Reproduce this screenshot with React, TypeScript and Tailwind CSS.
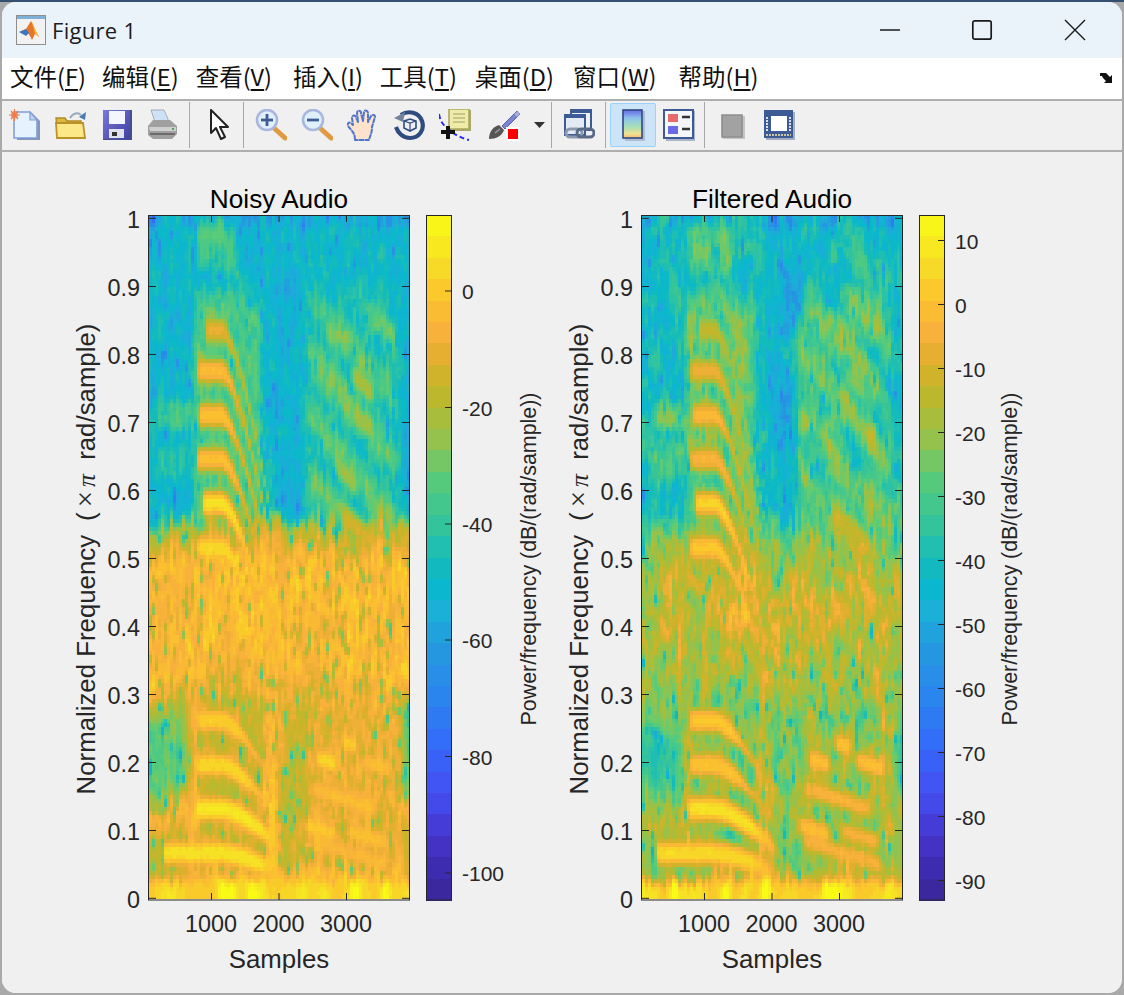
import React, { useMemo } from "react";

const STOPS: [number, number, number, number][] = [
  [0, 0x3a, 0x26, 0x98], [0.04, 0x3c, 0x2a, 0xaa], [0.09, 0x45, 0x35, 0xcc], [0.16, 0x44, 0x50, 0xf4],
  [0.22, 0x35, 0x68, 0xfa], [0.29, 0x2b, 0x84, 0xf0], [0.36, 0x25, 0x96, 0xe0], [0.42, 0x1b, 0xb0, 0xd8],
  [0.46, 0x08, 0xb8, 0xcc], [0.5, 0x18, 0xbc, 0xb8], [0.55, 0x35, 0xc5, 0x9a], [0.62, 0x5b, 0xcb, 0x78],
  [0.66, 0x8c, 0xc4, 0x52], [0.73, 0xb9, 0xb9, 0x2e], [0.78, 0xd9, 0xb0, 0x2a], [0.82, 0xf7, 0xae, 0x3c],
  [0.88, 0xfc, 0xc3, 0x2d], [0.93, 0xf6, 0xde, 0x26], [1, 0xf9, 0xfb, 0x15],
];
function color(v: number) {
  const x = Math.min(1, Math.max(0, v));
  for (let i = 1; i < STOPS.length; i++) {
    if (x <= STOPS[i][0]) {
      const a = STOPS[i - 1], b = STOPS[i];
      const k = (x - a[0]) / (b[0] - a[0]);
      return `rgb(${Math.round(a[1] + (b[1] - a[1]) * k)},${Math.round(a[2] + (b[2] - a[2]) * k)},${Math.round(a[3] + (b[3] - a[3]) * k)})`;
    }
  }
  return "rgb(249,251,21)";
}
function hash(a: number, b: number, s: number) {
  const h = Math.sin(a * 127.1 + b * 311.7 + s * 74.7) * 43758.5453;
  return h - Math.floor(h);
}
const sm = (x: number, a: number, b: number) => {
  const k = Math.min(1, Math.max(0, (x - a) / (b - a)));
  return k * k * (3 - 2 * k);
};
const win = (x: number, a: number, b: number, e: number) => sm(x, a - e, a + e) * (1 - sm(x, b - e, b + e));
const plateau = (x: number, c: number, w: number) => {
  const d = (x - c) / w;
  return Math.exp(-Math.abs(d * d * d));
};
function vnoise(x: number, y: number, s: number) {
  const xi = Math.floor(x), yi = Math.floor(y);
  const fx = sm(x - xi, 0, 1), fy = sm(y - yi, 0, 1);
  const a = hash(xi, yi, s), b = hash(xi + 1, yi, s), c = hash(xi, yi + 1, s), d = hash(xi + 1, yi + 1, s);
  return (a * (1 - fx) + b * fx) * (1 - fy) + (c * (1 - fx) + d * fx) * fy - 0.5;
}

const H1: [number, number, number, number, number][] = [
  [0.065, 0.95, 0.93, 0.05, 0.41],
  [0.13, 0.96, 0.95, 0.17, 0.41],
  [0.195, 0.93, 0.89, 0.18, 0.37],
  [0.26, 0.91, 0.9, 0.18, 0.35],
  [0.515, 0.93, 0.9, 0.18, 0.33],
  [0.58, 0.95, 0.92, 0.2, 0.34],
  [0.645, 0.88, 0.85, 0.18, 0.33],
  [0.71, 0.89, 0.86, 0.19, 0.31],
  [0.775, 0.87, 0.82, 0.18, 0.31],
  [0.835, 0.81, 0.76, 0.21, 0.3],
  [0.975, 0.62, 0.55, 0.18, 0.3],
  [0.905, 0.62, 0.64, 0.3, 0.36],
];
const H2: [number, number, number, number, number][] = [
  [0.065, 0.86, 0.84, 0.6, 0.94],
  [0.1, 0.9, 0.88, 0.58, 0.74],
  [0.09, 0.88, 0.84, 0.74, 0.93],
  [0.145, 0.87, 0.85, 0.6, 0.9],
  [0.2, 0.93, 0.89, 0.62, 0.74],
  [0.225, 0.91, 0.89, 0.72, 0.82],
  [0.195, 0.88, 0.88, 0.8, 0.95],
  [0.83, 0.69, 0.66, 0.66, 0.73],
  [0.755, 0.71, 0.65, 0.76, 0.88],
  [0.7, 0.7, 0.66, 0.76, 0.88],
  [0.62, 0.69, 0.66, 0.7, 0.82],
  [0.54, 0.78, 0.75, 0.72, 0.9],
];

function value(c: number, r: number, cols: number, rows: number, seed: number, filtered: boolean) {
  const t = (c + 0.5) / cols;
  const y = 215 + ((r + 0.5) / rows) * 685;
  const f = (898.3 - y) / 680;
  const off = Math.floor(hash(c, 99, seed) * 3);
  const n = hash(c, Math.floor((r + off) / 3), seed) - 0.5;
  const n2 = hash(c, r, seed + 1) - 0.5;
  const rare = hash(c, Math.floor((r + off) / 2), seed + 2);
  const slow = vnoise(c / 4, r / 9, seed + 3);
  const fj = f + (hash(c, 77, seed) - 0.5) * 0.035;

  let hi = (filtered ? 0.495 : 0.46) + n * (filtered ? 0.14 : 0.12) + n2 * 0.06 + slow * (filtered ? 0.12 : 0.05);
  if (rare < 0.05) hi -= 0.14;
  if (f > 0.985) hi -= 0.07 * (hash(c, 5, seed) > 0.4 ? 1 : 0);
  const syl2 = win(t, 0.6, 0.95, 0.03) * (1 - sm(f, 0.84, 0.92));
  hi += syl2 * (0.11 + 0.06 * Math.sin(t * 34 + f * 70));
  const syl1 = win(t, 0.17, 0.43, 0.02) * (1 - sm(f, 0.86, 0.92));
  hi += syl1 * 0.14;
  hi += win(t, 0.19, 0.33, 0.02) * win(f, 0.92, 1.0, 0.01) * 0.1;
  hi += win(t, 0.04, 0.16, 0.02) * win(f, 0.69, 0.73, 0.008) * 0.12;
  hi += win(t, 0.03, 0.16, 0.02) * win(f, 0.62, 0.66, 0.008) * 0.06;
  hi -= win(t, 0.47, 0.6, 0.02) * (filtered ? 0.05 : 0.015);

  let lo = (filtered ? 0.745 : 0.86) + n * (filtered ? 0.17 : 0.1) + n2 * (filtered ? 0.06 : 0.05) + slow * (filtered ? 0.16 : 0.05);
  if (rare < 0.1) lo -= filtered ? 0.12 : 0.16;
  if (rare < 0.025) lo -= 0.14;
  lo -= sm(fj, 0.49, 0.54) * (filtered ? 0 : 0.1);
  const gate = sm(fj, 0.03, 0.06) * (1 - sm(fj, 0.27, 0.36));
  const side = Math.max(1 - sm(t, 0.11, 0.19), sm(t, 0.95, 0.99));
  const fm = Math.max(sm(fj, 0.12, 0.17) * (1 - sm(fj, 0.25, 0.33)), 0.45 * (1 - sm(fj, 0.09, 0.14)));
  lo -= side * fm * (filtered ? 0.16 : 0.24) + side * fm * n * 0.2;
  lo -= gate * win(t, 0.19, 0.44, 0.01) * 0.1;
  lo -= gate * win(t, 0.5, 0.6, 0.03) * 0.1;
  lo -= gate * win(t, 0.6, 0.95, 0.02) * 0.05;

  const mask = filtered ? sm(fj, 0.44, 0.62) : sm(fj, 0.54, 0.565);
  let v = lo * (1 - mask) + hi * mask;

  for (const [fc, an, af, t0, t1] of H1) {
    const a = filtered ? af : an;
    const k = t > 0.28 ? Math.pow((t - 0.28) / 0.22, 1.5) : 0;
    const center = fc * (1 - 0.42 * k);
    const flat = 1 - sm(t, t1 - 0.03, t1 + 0.04);
    const w = fc < 0.15 ? 0.024 + 0.006 * flat : 0.013 + 0.016 * flat;
    const env = sm(t, t0 - 0.012, t0 + 0.012) * (1 - sm(t, 0.5, 0.58));
    const drop = 1 - 0.16 * (1 - flat) * sm(t, t1, 0.55);
    const g = plateau(f, center, w);
    v = Math.max(v, a * drop * env * g + n2 * 0.02 * g);
  }
  for (const [fc, an, af, t0, t1] of H2) {
    const a = filtered ? af : an;
    const e = win(t, t0, t1, 0.035);
    const tc = (t0 + t1) / 2;
    const slope = fc > 0.5 ? -0.35 : -0.12;
    const g = plateau(f, fc + (t - tc) * slope, fc > 0.5 ? 0.03 : 0.024);
    v = Math.max(v, a * e * g + n2 * 0.04 * g);
  }
  const fb = f + (hash(c, 41, seed) - 0.5) * 0.012;
  if (fb < 0.032) {
    const x = c / 3.4;
    const xi = Math.floor(x);
    const q = sm(x - xi, 0, 1);
    const bump = hash(xi, 7, seed + 4) * (1 - q) + hash(xi + 1, 7, seed + 4) * q;
    const top = 1 - sm(fb, 0.016, 0.032);
    v = v * (1 - top) + (0.89 + 0.14 * bump * bump + n2 * 0.015) * top;
  }
  return v;
}

function Heat({ seed, filtered }: { seed: number; filtered: boolean }) {
  const paths = useMemo(() => {
    const cols = 87, rows = 171, lv = 48;
    const g: number[][] = [];
    for (let c = 0; c < cols; c++) {
      g[c] = [];
      for (let r = 0; r < rows; r++) g[c][r] = value(c, r, cols, rows, seed, filtered);
    }
    const at = (c: number, r: number) => g[Math.min(cols - 1, Math.max(0, c))][Math.min(rows - 1, Math.max(0, r))];
    const d: string[] = Array.from({ length: lv }, () => "");
    for (let c = 0; c < cols; c++) {
      for (let r = 0; r < rows; r++) {
        const vert = (at(c, r - 2) + 2 * at(c, r - 1) + 3 * at(c, r) + 2 * at(c, r + 1) + at(c, r + 2)) / 9;
        const horiz = (at(c - 1, r) + 2 * at(c, r) + at(c + 1, r)) / 4;
        const v = 0.6 * vert + 0.25 * horiz + 0.15 * at(c, r);
        const q = Math.min(lv - 1, Math.max(0, Math.round(v * (lv - 1))));
        d[q] += `M${149 + c * 3} ${215 + r * 4}h3v4h-3z`;
      }
    }
    return d;
  }, [seed, filtered]);
  return (
    <g shapeRendering="crispEdges">
      {paths.map((p, i) => (p ? <path key={i} d={p} fill={color(i / 47)} /> : null))}
    </g>
  );
}

const YT: [string, number][] = [
  ["1", 218.3], ["0.9", 286.5], ["0.8", 354.5], ["0.7", 422.5], ["0.6", 490.5], ["0.5", 558.5],
  ["0.4", 626.5], ["0.3", 694.5], ["0.2", 762.5], ["0.1", 830.5], ["0", 898.3],
];
const XT: [string, number][] = [["1000", 211.5], ["2000", 279], ["3000", 346.5]];
const DARK = "#262626";

function Subplot({ title, seed, filtered, cticks, labelX }: { title: string; seed: number; filtered: boolean; cticks: [string, number][]; labelX: number }) {
  const bars = Array.from({ length: 32 }, (_, i) => i);
  return (
    <svg width={493} height={841} viewBox="2 152 493 841" className="shrink-0 block overflow-visible">
      <Heat seed={seed} filtered={filtered} />
      <rect x={148.5} y={215.5} width={261} height={684.5} fill="none" stroke={DARK} strokeWidth={1} />
      {YT.map(([l, y]) => (
        <g key={l}>
          <path d={`M149 ${y}h7M409 ${y}h-7`} stroke={DARK} strokeWidth={1} />
          <text x={140} y={y + 9.5} textAnchor="end" fontSize={23.4} fill={DARK}>{l}</text>
        </g>
      ))}
      {XT.map(([l, x]) => (
        <g key={l}>
          <path d={`M${x} 900v-7M${x} 215v7`} stroke={DARK} strokeWidth={1} />
          <text x={x - 0.5} y={932} textAnchor="middle" fontSize={23.4} fill={DARK}>{l}</text>
        </g>
      ))}
      <text x={279} y={207.5} textAnchor="middle" fontSize={26.2} fill="#000">{title}</text>
      <text x={279} y={967.5} textAnchor="middle" fontSize={25.8} fill={DARK}>Samples</text>
      <text transform="translate(95 559) rotate(-90)" textAnchor="middle" fontSize={25.8} fill={DARK}>
        <tspan>Normalized Frequency</tspan>
        <tspan dx={14}>(</tspan>
        <tspan dx={5} fontFamily="'Liberation Serif', serif" fontSize={29}>×</tspan>
        <tspan dx={4} fontFamily="'Liberation Serif', serif" fontStyle="italic">π</tspan>
        <tspan dx={7}> rad/sample)</tspan>
      </text>

      <g shapeRendering="crispEdges">
        {bars.map((i) => (
          <rect key={i} x={426} y={215 + (685 * i) / 32} width={26} height={685 / 32 + 1} fill={color(1 - (i + 0.5) / 32)} />
        ))}
      </g>
      <rect x={426.5} y={215.5} width={25} height={684.5} fill="none" stroke={DARK} strokeWidth={1} />
      {cticks.map(([l, y]) => (
        <g key={l}>
          <path d={`M451 ${y}h-6`} stroke={DARK} strokeWidth={1} />
          <text x={462} y={y + 8} fontSize={21} fill={DARK}>{l}</text>
        </g>
      ))}
      <text transform={`translate(${labelX} 559) rotate(-90)`} textAnchor="middle" fontSize={21.4} fill={DARK}>
        Power/frequency (dB/(rad/sample))
      </text>
    </svg>
  );
}

const Ico = ({ children }: { children: React.ReactNode }) => (
  <svg width={32} height={32} viewBox="0 0 32 32" className="block blur-[0.5px]">{children}</svg>
);

const IconNew = () => (
  <Ico>
    <path d="M6 4h17l8 8v19H8V4z" fill="#8796b8" />
    <path d="M5 3h16l7 8v18H5z" fill="#e6f2fd" stroke="#7f9fd6" strokeWidth={1.6} />
    <path d="M21 3v8h7z" fill="#c3d4ee" stroke="#7f9fd6" strokeWidth={1.2} />
    <circle cx={5.5} cy={6} r={3.6} fill="#f0a070" />
    <path d="M5.5 0v12M0 6h11M2 2l7 8M9 2l-7 8" stroke="#ea7c4c" strokeWidth={1.2} />
  </Ico>
);
const IconOpen = () => (
  <Ico>
    <path d="M1 9h9l2 3h14v17H3z" fill="#e0b83c" stroke="#b08c28" strokeWidth={1.4} />
    <path d="M2 29l-1-15h27l2 15z" fill="#fde888" stroke="#bb9128" strokeWidth={1.8} />
    <path d="M15 9c3-5 8-6 11-3" fill="none" stroke="#9aa8bc" strokeWidth={2} />
    <path d="M31 3l-1 8-6-3z" fill="#4b7bb0" />
  </Ico>
);
const IconSave = () => (
  <Ico>
    <defs>
      <linearGradient id="svg1" x1="0" y1="0" x2="1" y2="1">
        <stop offset="0" stopColor="#7878e0" />
        <stop offset="1" stopColor="#40409c" />
      </linearGradient>
    </defs>
    <path d="M2 1h29v30H2z" fill="#44508c" />
    <path d="M2 1h27v29H2z" fill="url(#svg1)" />
    <path d="M8 2h16v13H8z" fill="#f4f6ff" />
    <path d="M8 20h15v9H8z" fill="#dfe2ec" />
    <path d="M11 23h5v4h-5z" fill="#333" />
  </Ico>
);
const IconPrint = () => (
  <Ico>
    <path d="M4 1h13l4 9v6H9z" fill="#cfe2f5" stroke="#a4acb8" strokeWidth={1} />
    <path d="M1 17l5-6h17l7 6v8l-5 5H6l-5-4z" fill="#a0a0a0" />
    <path d="M2 18h27v4H3z" fill="#cfcfcf" />
    <path d="M3 25h25" stroke="#666" strokeWidth={1.8} />
    <path d="M25 19h2v2h-2z" fill="#4ea84e" />
  </Ico>
);
const IconPointer = () => (
  <Ico>
    <path d="M7 1l0 23 5-5 5 11 4-2-5-10h8z" fill="#fff" stroke="#222" strokeWidth={2} strokeLinejoin="round" />
  </Ico>
);
const Lens = ({ plus }: { plus: boolean }) => (
  <Ico>
    <path d="M19 19l11 10" stroke="#e09a40" strokeWidth={5} strokeLinecap="round" />
    <circle cx={12} cy={11} r={10} fill="#dff0fa" stroke="#a9b6de" strokeWidth={2.6} />
    <path d="M6 11h12" stroke="#3d5c94" strokeWidth={2.8} />
    {plus && <path d="M12 5v12" stroke="#3d5c94" strokeWidth={2.8} />}
  </Ico>
);
const IconHand = () => (
  <Ico>
    <path d="M8 31c0-4-1-7-3-9l-4-5c-1-3 1-4 3-3l2 2-1-7c0-3 3-3 4-1l2 5-1-9c0-3 4-3 4 0l2 8 1-9c0-2 4-2 4 1l0 9 3-6c2-2 4-1 4 1l-3 10c0 6-2 9-3 13z" fill="#fde3cc" stroke="#4f75cc" strokeWidth={2} strokeLinejoin="round" strokeDasharray="5 .5" />
  </Ico>
);
const IconRotate = () => (
  <Ico>
    <path d="M8 6c7-5 18-3 21 6 3 9-3 17-12 17-7 0-12-5-14-11" fill="none" stroke="#2f4c80" strokeWidth={4.2} />
    <path d="M1 9l11-6-2 10z" fill="#74839c" />
    <path d="M11 12l6-2 6 2v7l-6 3-6-3z" fill="#eef0f6" stroke="#2f4c80" strokeWidth={1.6} />
    <path d="M17 14v8M11 12l6 2 6-2" stroke="#2f4c80" strokeWidth={1.2} fill="none" />
  </Ico>
);
const IconTip = () => (
  <Ico>
    <path d="M10 1h22v21H10z" fill="#a8a868" />
    <path d="M10 0h20v20H10z" fill="#f0eca8" stroke="#a8a860" strokeWidth={1.6} />
    <path d="M14 5h12M14 9h12M14 13h12" stroke="#b8b880" strokeWidth={1.6} />
    <path d="M0 5c1 6 3 10 8 14s10 9 22 12" fill="none" stroke="#2a2af0" strokeWidth={2} strokeDasharray="5 3" />
    <path d="M9 17v13M2 23h14" stroke="#111" strokeWidth={4} />
  </Ico>
);
const IconBrush = () => (
  <Ico>
    <path d="M14 17L29 2l3 3-15 15z" fill="#7c86d0" stroke="#5a62a8" strokeWidth={1} />
    <path d="M30 2l2 3-3 3-3-3z" fill="#a8aedc" />
    <path d="M1 30c0-6 3-12 10-14l5 5c-2 6-8 9-15 9z" fill="#555" />
    <path d="M7 24l5-4" stroke="#a0a0a0" strokeWidth={1.4} />
    <path d="M18 18h14v14H18z" fill="#fff" />
    <path d="M20 20h10v10H20z" fill="#f00" />
  </Ico>
);
const IconLink = () => (
  <Ico>
    <path d="M8 1h20v20H8z" fill="#eef2f8" stroke="#3c5a94" strokeWidth={2} />
    <path d="M8 1h20v3H8z" fill="#3c5a94" />
    <path d="M2 6h20v20H2z" fill="#e4eaf3" stroke="#3c5a94" strokeWidth={2} />
    <path d="M2 6h20v3H2z" fill="#3c5a94" />
    <rect x={3} y={20} width={16} height={8} rx={4} fill="none" stroke="#8c99ad" strokeWidth={3} />
    <rect x={14} y={20} width={17} height={8} rx={4} fill="none" stroke="#5a6a86" strokeWidth={3} />
  </Ico>
);
const IconColorbar = () => (
  <Ico>
    <defs>
      <linearGradient id="cbg" x1="0" y1="0" x2="0" y2="1">
        <stop offset="0" stopColor="#6a6ae8" />
        <stop offset="0.3" stopColor="#8cc4ea" />
        <stop offset="0.6" stopColor="#a8e0b8" />
        <stop offset="0.85" stopColor="#f0e090" />
        <stop offset="1" stopColor="#f8b878" />
      </linearGradient>
    </defs>
    <path d="M8 2h20v30H8z" fill="#b0bcd0" />
    <rect x={6} y={1} width={19} height={28} fill="url(#cbg)" stroke="#2f4a80" strokeWidth={1.6} />
  </Ico>
);
const IconLegend = () => (
  <Ico>
    <path d="M3 2h29v30H3z" fill="#a8b4c8" />
    <rect x={1} y={1} width={29} height={28} fill="#f4f6fa" stroke="#3c5a94" strokeWidth={2} />
    <path d="M5 5h10v8H5z" fill="#e86a6a" />
    <path d="M5 17h10v8H5z" fill="#6a6ae6" />
    <path d="M19 8h8M19 20h8" stroke="#333" strokeWidth={2.4} />
  </Ico>
);
const IconGray = () => (
  <Ico>
    <path d="M6 7h22v23H6z" fill="#c4c4c4" />
    <path d="M5 6h20v22H5z" fill="#a2a2a2" stroke="#8e8e8e" strokeWidth={1.6} />
  </Ico>
);
const IconTools = () => (
  <Ico>
    <path d="M3 3h29v28H3z" fill="#a4aebe" />
    <path d="M1 1h29v28H1z" fill="#3c5a94" />
    <path d="M8 7h16v15H8z" fill="#fff" />
    <path d="M4 8v14M27 8v14" stroke="#dadfe6" strokeWidth={2} strokeDasharray="2 1" />
    <path d="M3 26h25" stroke="#c9c6a6" strokeWidth={2} strokeDasharray="2 1" />
  </Ico>
);

const Btn = ({ children, active }: { children: React.ReactNode; active?: boolean }) => (
  <div className={active ? "w-[46px] h-[44px] flex items-center justify-center bg-[#cce4f7] border border-[#99d1ff] rounded-[2px]" : "w-[46px] h-[44px] flex items-center justify-center"}>
    {children}
  </div>
);
const Sep = () => <div className="w-px h-[46px] bg-[#a8a8a8]" />;

const MENU: [string, string, string][] = [
  ["文件", "F", "whitespace-nowrap mr-[-1px]"],
  ["编辑", "E", "whitespace-nowrap"],
  ["查看", "V", "whitespace-nowrap mr-[4px]"],
  ["插入", "I", "whitespace-nowrap"],
  ["工具", "T", "whitespace-nowrap mr-[1px]"],
  ["桌面", "D", "whitespace-nowrap mr-[2px]"],
  ["窗口", "W", "whitespace-nowrap mr-[5px]"],
  ["帮助", "H", "whitespace-nowrap"],
];

export default function App() {
  return (
    <div className="w-[1124px] h-[995px] overflow-hidden bg-[#a9a9a9] border-t-2 border-[#35506e] font-['Liberation_Sans',sans-serif]">
      <div className="ml-[2px] mr-[2px] h-[991px] flex flex-col rounded-[14px] overflow-hidden bg-[#f0f0f0]">
        <div className="h-[56px] shrink-0 bg-[#ebf3fa] flex items-center pl-[14px] text-[#1c1c1c]">
          <svg width={30} height={30} viewBox="0 0 30 30" className="block shrink-0">
            <rect x={0.5} y={0.5} width={29} height={29} fill="#f2f2f2" stroke="#8e8e8e" />
            <path d="M1 1h28v3H1z" fill="#7fb0d6" />
            <path d="M3 17l7-3 5-8c2 2 3 7 8 16l-4-3-3 6c-2-4-4-8-6-9z" fill="#e8762a" />
            <path d="M15 6c2 2 3 7 8 16l-4-3c-1-5-2-9-4-13z" fill="#f6c23c" />
            <path d="M3 17l7-3 3 4-3 3z" fill="#3a78c0" />
          </svg>
          <span className="ml-[6px] text-[22px] leading-none tracking-[0.3px] font-['Open_Sans',sans-serif]">Figure 1</span>
          <div className="flex-1" />
          <svg width={24} height={24} viewBox="0 0 24 24" className="block mr-[68px]">
            <path d="M2 12h20" stroke="#1a1a1a" strokeWidth={1.6} />
          </svg>
          <svg width={24} height={24} viewBox="0 0 24 24" className="block mr-[69px]">
            <rect x={2.8} y={2.8} width={18.4} height={18.4} rx={2} fill="none" stroke="#1a1a1a" strokeWidth={1.7} />
          </svg>
          <svg width={24} height={24} viewBox="0 0 24 24" className="block mr-[35px]">
            <path d="M2 2l20 20M22 2L2 22" stroke="#1a1a1a" strokeWidth={1.4} />
          </svg>
        </div>
        <div className="h-[41px] shrink-0 bg-white flex items-center pl-[8px] pb-[3px] gap-[17px] text-[23.5px] leading-none text-[#111] font-['Noto_Sans_CJK_SC',sans-serif]">
          {MENU.map(([zh, k, cls]) => (
            <span key={k} className={cls}>
              {zh}(<span className="underline underline-offset-[3px]">{k}</span>)
            </span>
          ))}
          <div className="flex-1" />
          <svg width={16} height={14} viewBox="0 0 16 14" className="block mr-[7px] mt-[2px]">
            <path d="M1 2h6l1 1 3 3 2-2v8H5l2-2-3-3-1-2H1z" fill="#111" />
          </svg>
        </div>
        <div className="h-[53px] shrink-0 bg-[#f0f0f0] border-y-2 border-[#aeaeae] flex items-center pb-[1px]">
          <Btn><IconNew /></Btn>
          <Btn><IconOpen /></Btn>
          <Btn><IconSave /></Btn>
          <Btn><IconPrint /></Btn>
          <div className="ml-[3px] mr-[7px]"><Sep /></div>
          <Btn><IconPointer /></Btn>
          <div className="mr-[4px]"><Sep /></div>
          <Btn><Lens plus /></Btn>
          <Btn><Lens plus={false} /></Btn>
          <Btn><IconHand /></Btn>
          <Btn><IconRotate /></Btn>
          <Btn><IconTip /></Btn>
          <div className="ml-[3px]"><Btn><IconBrush /></Btn></div>
          <svg width={12} height={6} viewBox="0 0 12 6" className="block ml-[7px] mr-[5px]"><path d="M0 0h11L5.5 6z" fill="#333" /></svg>
          <Sep />
          <div className="ml-[4px] mr-[3px]"><Btn><IconLink /></Btn></div>
          <Sep />
          <div className="ml-[4px]"><Btn active><IconColorbar /></Btn></div>
          <Btn><IconLegend /></Btn>
          <div className="ml-[2px] mr-[5px]"><Sep /></div>
          <Btn><IconGray /></Btn>
          <Btn><IconTools /></Btn>
        </div>
        <div className="flex-1 flex items-start bg-[#f0f0f0]">
          <Subplot
            title="Noisy Audio"
            seed={3}
            filtered={false}
            labelX={536}
            cticks={[["0", 291], ["-20", 407.5], ["-40", 524], ["-60", 640], ["-80", 756.5], ["-100", 873]]}
          />
          <Subplot
            title="Filtered Audio"
            seed={11}
            filtered
            labelX={524}
            cticks={[["10", 240.5], ["0", 304.5], ["-10", 368.5], ["-20", 432.5], ["-30", 496.5], ["-40", 560.5], ["-50", 624.5], ["-60", 688.5], ["-70", 752.5], ["-80", 816.5], ["-90", 880.5]]}
          />
        </div>
      </div>
    </div>
  );
}
